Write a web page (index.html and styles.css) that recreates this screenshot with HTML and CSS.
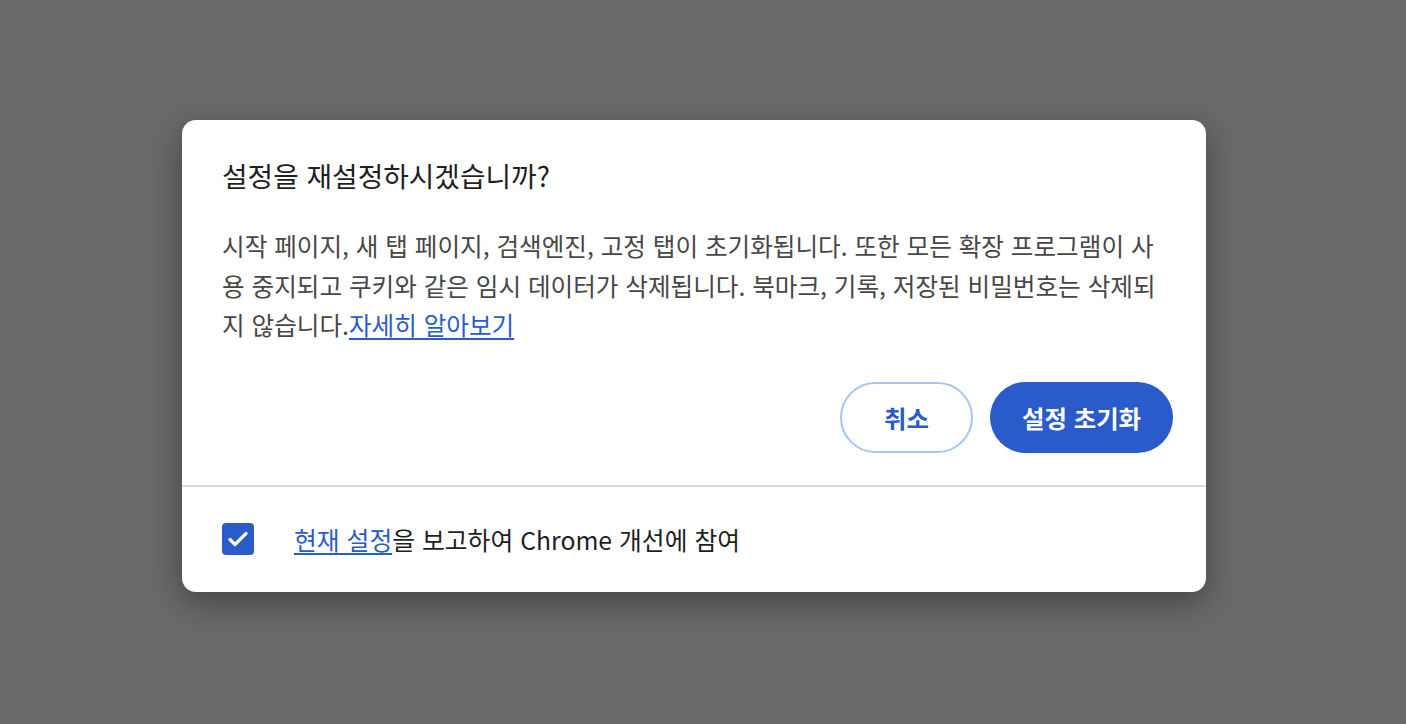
FILE: index.html
```html
<!DOCTYPE html>
<html lang="ko">
<head>
<meta charset="utf-8">
<link rel="stylesheet" href="styles.css">
</head>
<body>
<div class="backdrop">
  <div class="dialog">
    <div class="main">
      <h1 class="title">설정을 재설정하시겠습니까?</h1>
      <p class="body">시작 페이지, 새 탭 페이지, 검색엔진, 고정 탭이 초기화됩니다. 또한 모든 확장 프로그램이 사용 중지되고 쿠키와 같은 임시 데이터가 삭제됩니다. 북마크, 기록, 저장된 비밀번호는 삭제되지 않습니다.<a class="link" href="#">자세히 알아보기</a></p>
      <div class="actions">
        <button class="btn btn-cancel">취소</button>
        <button class="btn btn-primary">설정 초기화</button>
      </div>
    </div>
    <div class="footer">
      <span class="checkbox">
        <svg width="32" height="32" viewBox="0 0 32 32"><path d="M8 16.5 L13 21.5 L24 10.5" fill="none" stroke="#fff" stroke-width="3.2" stroke-linecap="round" stroke-linejoin="round"/></svg>
      </span>
      <span class="footer-text"><a class="link" href="#">현재 설정</a>을 보고하여 Chrome 개선에 참여</span>
    </div>
  </div>
</div>
</body>
</html>
```
FILE: styles.css
```css
html, body {
  margin: 0;
  padding: 0;
  height: 100%;
}
body {
  background: #696969;
  font-family: "Noto Sans CJK KR", "Noto Sans", sans-serif;
}
.backdrop {
  padding-top: 120px;
  padding-left: 182px;
}
.dialog {
  width: 1024px;
  height: 472px;
  background: #fff;
  border-radius: 14px;
  box-shadow: 0 10px 32px rgba(0, 0, 0, 0.35);
  overflow: hidden;
  box-sizing: border-box;
}
.main {
  padding: 38px 33px 33px 40px;
  border-bottom: 2px solid #dcdcdc;
  height: 367px;
  box-sizing: border-box;
}
.title {
  margin: 0 0 34px 0;
  font-size: 27.8px;
  line-height: 34px;
  font-weight: 400;
  color: #1f1f1f;
}
.body {
  margin: 0;
  width: 944px;
  font-size: 24.6px;
  line-height: 39.5px;
  color: #474747;
}
.link {
  color: #2a5bcb;
  text-decoration: underline;
  text-underline-offset: 3px;
  text-decoration-thickness: 1.5px;
}
.actions {
  display: flex;
  justify-content: flex-end;
  gap: 17px;
  margin-top: 37px;
}
.btn {
  height: 71px;
  border-radius: 36px;
  font-family: "Noto Sans CJK KR", "Noto Sans", sans-serif;
  font-size: 24.4px;
  font-weight: 600;
  box-sizing: border-box;
  cursor: pointer;
}
.btn-cancel {
  width: 133px;
  background: #fff;
  color: #2a5bcb;
  border: 2px solid #a8c4f5;
}
.btn-primary {
  width: 183px;
  background: #2a5bcb;
  color: #fff;
  border: none;
}
.footer {
  display: flex;
  align-items: center;
  gap: 40px;
  padding: 0 40px;
  height: 103px;
}
.checkbox {
  width: 32px;
  height: 32px;
  border-radius: 4px;
  background: #2a5bcb;
  display: flex;
  align-items: center;
  justify-content: center;
  flex: none;
}
.footer-text {
  font-size: 24.8px;
  line-height: 32px;
  color: #1f1f1f;
}
```
